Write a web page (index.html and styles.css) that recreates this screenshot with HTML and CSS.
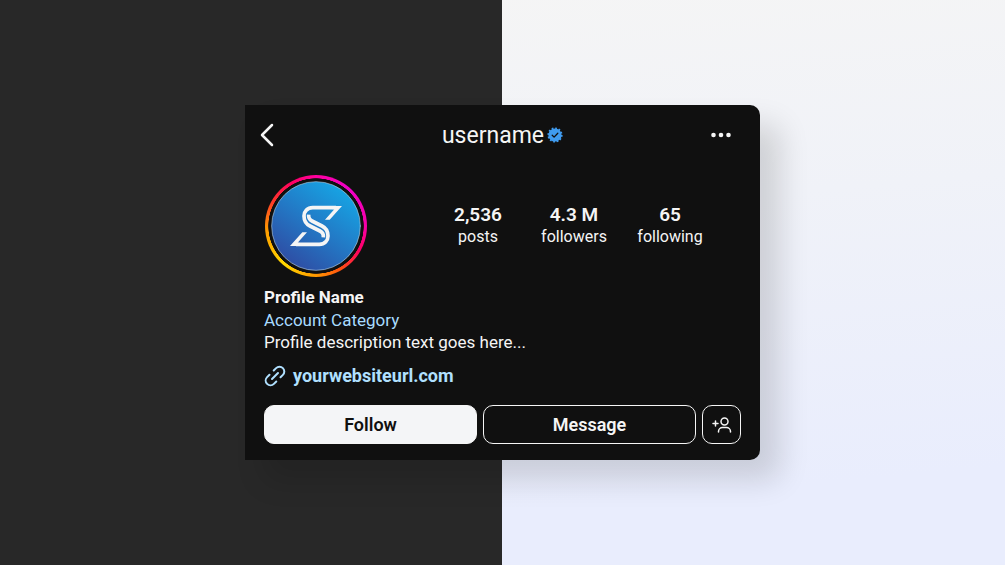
FILE: index.html
```html
<!DOCTYPE html>
<html lang="en">
<head>
  <meta charset="UTF-8" />
  <meta name="viewport" content="width=device-width, initial-scale=1" />
  <title>username</title>
  <link rel="stylesheet" href="styles.css">
</head>
<body>

<main class="profile-card">
  <header class="top-bar">
    <button class="icon-button back" aria-label="Back">
      <svg width="14" height="24" viewBox="0 0 14 24"><path d="M12 2 2 12l10 10" /></svg>
    </button>
    <h1 class="username">
      username
      <svg class="verified" width="16" height="16" viewBox="0 0 16 16">
        <circle cx="8" cy="8" r="6.6" />
        <circle class="scallop" cx="8" cy="8" r="6.6" />
        <path d="m5.2 8.2 1.9 1.9 3.7-3.9" />
      </svg>
    </h1>
    <button class="icon-button more" aria-label="More">
      <svg width="20" height="6" viewBox="0 0 20 6"><circle cx="2.5" cy="3" r="2.3" /><circle cx="10" cy="3" r="2.3" /><circle cx="17.5" cy="3" r="2.3" /></svg>
    </button>
  </header>

  <section class="summary">
    <div class="avatar">
      <svg class="logo" viewBox="0 0 306 306">
        <defs>
          <linearGradient id="blue" x1="0.2" y1="1" x2="0.85" y2="0.1">
            <stop offset="0" stop-color="#3048a0" />
            <stop offset="0.5" stop-color="#2377c4" />
            <stop offset="1" stop-color="#16a5e4" />
          </linearGradient>
        </defs>
        <circle class="disc" cx="153" cy="153" r="133" />
        <g transform="translate(63 81)">
          <path class="band" d="M150 17H80C64 17 54 28 54 42C54 58 60 66 72 72L102 87C110 91 113 97 112 106" />
          <path class="band" d="M30 127H100C116 127 126 116 126 102C126 86 120 78 108 72L78 57C70 53 67 47 68 38" />
          <path class="tip" d="M168 12H140V22H145L117 53H131ZM12 132H40V122H35L63 91H49Z" />
        </g>
      </svg>
    </div>
    <ul class="stats">
      <li><strong>2,536</strong><span>posts</span></li>
      <li><strong>4.3 M</strong><span>followers</span></li>
      <li><strong>65</strong><span>following</span></li>
    </ul>
  </section>

  <section class="bio">
    <h2>Profile Name</h2>
    <p class="category">Account Category</p>
    <p>Profile description text goes here...</p>
    <a class="website" href="#">
      <svg width="22" height="22" viewBox="-1 -1 22 22">
        <path d="M8.700 4.500 11.100 2.100a4.800 4.800 0 0 1 6.800 6.800L15.500 11.300M11.300 15.500 8.900 17.900a4.800 4.800 0 0 1-6.800-6.800L4.500 8.700M7 13l6-6" />
      </svg>
      yourwebsiteurl.com
    </a>
  </section>

  <div class="actions">
    <button class="btn follow">Follow</button>
    <button class="btn">Message</button>
    <button class="btn add" aria-label="Suggested accounts">
      <svg width="20" height="16" viewBox="0 0 20 16">
        <circle cx="12.5" cy="4.5" r="3.5" />
        <path d="M6.500 15v-.500c0-2.200 1.800-4 4-4h4c2.200 0 4 1.800 4 4v.500M1 6.500h5M3.500 4v5" />
      </svg>
    </button>
  </div>
</main>

</body>
</html>
```
FILE: styles.css
```css
* {
  box-sizing: border-box;
}

body {
  margin: 0;
  min-height: 100vh;
  display: flex;
  justify-content: center;
  align-items: center;
  font-family: Roboto, "Liberation Sans", sans-serif;
  color: #f5f5f5;
  background: linear-gradient(90deg, #282828 50%, transparent 50%),
    linear-gradient(175deg, #f5f5f5 5%, #f0f2f8 40%, #e9edfd 85%);
}

h1, h2, p, ul {
  margin: 0;
  padding: 0;
}

button {
  font-family: inherit;
  color: inherit;
  cursor: pointer;
}

svg {
  display: block;
  fill: none;
  stroke: currentColor;
  stroke-linecap: round;
  stroke-linejoin: round;
}

.profile-card {
  width: 100%;
  max-width: 515px;
  padding: 16px 19px;
  background-color: #101010;
  border-radius: 0 10px 10px 0;
  box-shadow: 20px 20px 30px rgba(0, 0, 0, 0.14);
}

/* header */
.top-bar {
  display: flex;
  justify-content: space-between;
  align-items: center;
  height: 28px;
}

.icon-button {
  width: 40px;
  display: flex;
  padding: 0;
  border: none;
  background: none;
}

.back {
  width: 44px;
  margin-left: -4px;
  stroke-width: 2.5;
}

.more {
  justify-content: flex-end;
  padding-right: 10px;
}

.more svg {
  fill: currentColor;
  stroke: none;
}

.username {
  display: flex;
  align-items: center;
  gap: 3px;
  font-size: 23px;
  font-weight: 400;
}

.verified circle {
  fill: #409cf0;
  stroke: none;
}

.verified .scallop {
  fill: none;
  stroke: #409cf0;
  stroke-width: 2;
  stroke-dasharray: 1.7 1.756;
  stroke-linecap: butt;
}

.verified path {
  stroke: #101010;
  stroke-width: 1.3;
}

/* avatar and numbers */
.summary {
  display: flex;
  align-items: center;
  gap: 63px;
  margin-top: 26px;
  padding-left: 1px;
}

.avatar {
  width: 102px;
  height: 102px;
  border-radius: 50%;
  background: radial-gradient(circle closest-side, #101010 93%, transparent 94%),
    conic-gradient(#ff00a0, #f000c8 40deg, #f800a8 90deg, #ff0060 120deg, #ff5010 150deg, #ff9800 180deg, #ffd800 220deg, #ff9c00 265deg, #ff3828 300deg, #ff0060 330deg, #ff00a0);
}

.logo .disc {
  fill: url(#blue);
  stroke: #a8c4dc;
  stroke-width: 2;
}

.logo .band {
  stroke: #f5f5f5;
  stroke-width: 11;
  stroke-linecap: butt;
}

.logo .tip {
  fill: #f5f5f5;
  stroke: none;
}

.stats {
  display: flex;
  list-style: none;
}

.stats li {
  width: 96px;
  display: flex;
  flex-direction: column;
  align-items: center;
  line-height: 22px;
}

.stats strong {
  font-size: 19px;
  font-weight: 600;
}

.stats span {
  font-size: 16px;
}

/* bio */
.bio {
  margin-top: 9px;
  font-size: 17px;
  line-height: 22px;
}

.bio h2 {
  margin-bottom: 1px;
  font-size: 17px;
  font-weight: 700;
}

.category {
  color: #a8dcff;
}

.website {
  display: flex;
  align-items: center;
  gap: 7px;
  margin-top: 12px;
  color: #b0e0ff;
  font-size: 18px;
  font-weight: 700;
  text-decoration: none;
}

.website svg {
  stroke-width: 2;
}

/* buttons */
.actions {
  display: flex;
  gap: 6px;
  margin-top: 18px;
}

.btn {
  flex: 1;
  height: 39px;
  display: flex;
  justify-content: center;
  align-items: center;
  padding: 0;
  border: 1px solid #f5f5f5;
  border-radius: 10px;
  background: none;
  font-size: 18px;
  font-weight: 600;
}

.follow {
  background-color: #f4f5f7;
  color: #101010;
}

.add {
  flex: 0 0 39px;
}

.add svg {
  stroke-width: 1.5;
}
```
